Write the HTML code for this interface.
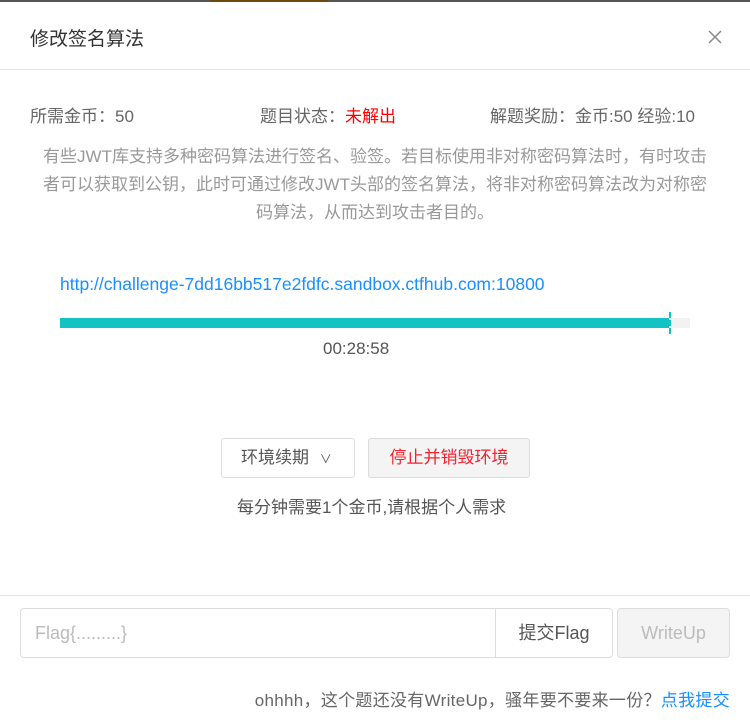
<!DOCTYPE html>
<html><head><meta charset="utf-8"><style>
*{margin:0;padding:0;box-sizing:border-box}
body{width:750px;height:722px;background:#fff;font-family:"Liberation Sans","Noto Sans CJK SC",sans-serif;position:relative;overflow:hidden;color:#555}
.a{position:absolute;white-space:nowrap}
</style></head><body>
<div class="a" style="left:0;top:0;width:750px;height:2px;background:#555"></div>
<div class="a" style="left:210px;top:0;width:118px;height:2px;background:#6b4a10"></div>
<div class="a" style="left:30px;top:24px;font-size:19px;color:#333">修改签名算法</div>
<svg class="a" style="left:707px;top:29px" width="16" height="16" viewBox="0 0 16 16"><path d="M2 2L14 14M14 2L2 14" stroke="#888" stroke-width="1.5"/></svg>
<div class="a" style="left:0;top:69px;width:750px;height:1px;background:#e5e5e5"></div>
<div class="a" style="left:30px;top:102px;font-size:17px;color:#666">所需金币：50</div>
<div class="a" style="left:260px;top:102px;font-size:17px;color:#666">题目状态：<span style="color:#f00">未解出</span></div>
<div class="a" style="left:490px;top:102px;font-size:17px;color:#666">解题奖励：金币:50 经验:10</div>
<div class="a" style="left:0;top:143px;width:750px;text-align:center;font-size:17px;line-height:28px;color:#999">有些JWT库支持多种密码算法进行签名、验签。若目标使用非对称密码算法时，有时攻击<br>者可以获取到公钥，此时可通过修改JWT头部的签名算法，将非对称密码算法改为对称密<br>码算法，从而达到攻击者目的。</div>
<div class="a" style="left:60px;top:274px;font-size:17.5px;color:#1890ff">http://challenge-7dd16bb517e2fdfc.sandbox.ctfhub.com:10800</div>
<div class="a" style="left:60px;top:318px;width:630px;height:10px;background:#f2f2f2"></div>
<div class="a" style="left:60px;top:318px;width:609px;height:10px;background:#13c2c2"></div>
<div class="a" style="left:669px;top:312px;width:2px;height:22px;border-left:2px dashed #13c2c2"></div>
<div class="a" style="left:323px;top:339px;font-size:17px;color:#555">00:28:58</div>
<div class="a" style="left:221px;top:438px;width:134px;height:40px;border:1px solid #ddd;border-radius:3px;font-size:17px;line-height:38px;padding-left:19px;color:#555">环境续期 <span style="font-size:12px;margin-left:6px">∨</span></div>
<div class="a" style="left:368px;top:438px;width:162px;height:40px;border:1px solid #ddd;border-radius:3px;background:#f4f4f4;font-size:17px;line-height:38px;text-align:center;color:#f5222d">停止并销毁环境</div>
<div class="a" style="left:237px;top:493px;font-size:17px;color:#555">每分钟需要1个金币,请根据个人需求</div>
<div class="a" style="left:0;top:595px;width:750px;height:1px;background:#e5e5e5"></div>
<div class="a" style="left:20px;top:608px;width:593px;height:50px;border:1px solid #ddd;border-radius:4px"></div>
<div class="a" style="left:35px;top:623px;font-size:18px;color:#bbb">Flag{.........}</div>
<div class="a" style="left:495px;top:609px;width:1px;height:48px;background:#ddd"></div>
<div class="a" style="left:496px;top:609px;width:116px;height:48px;line-height:48px;text-align:center;font-size:18px;color:#555">提交Flag</div>
<div class="a" style="left:617px;top:608px;width:113px;height:50px;border:1px solid #ddd;border-radius:4px;background:#f4f4f4;line-height:48px;text-align:center;font-size:18px;color:#bbb">WriteUp</div>
<div class="a" style="right:20px;top:686px;font-size:17px;color:#666;letter-spacing:0.3px">ohhhh，这个题还没有WriteUp，骚年要不要来一份？<span style="color:#1890ff">点我提交</span></div>
</body></html>
